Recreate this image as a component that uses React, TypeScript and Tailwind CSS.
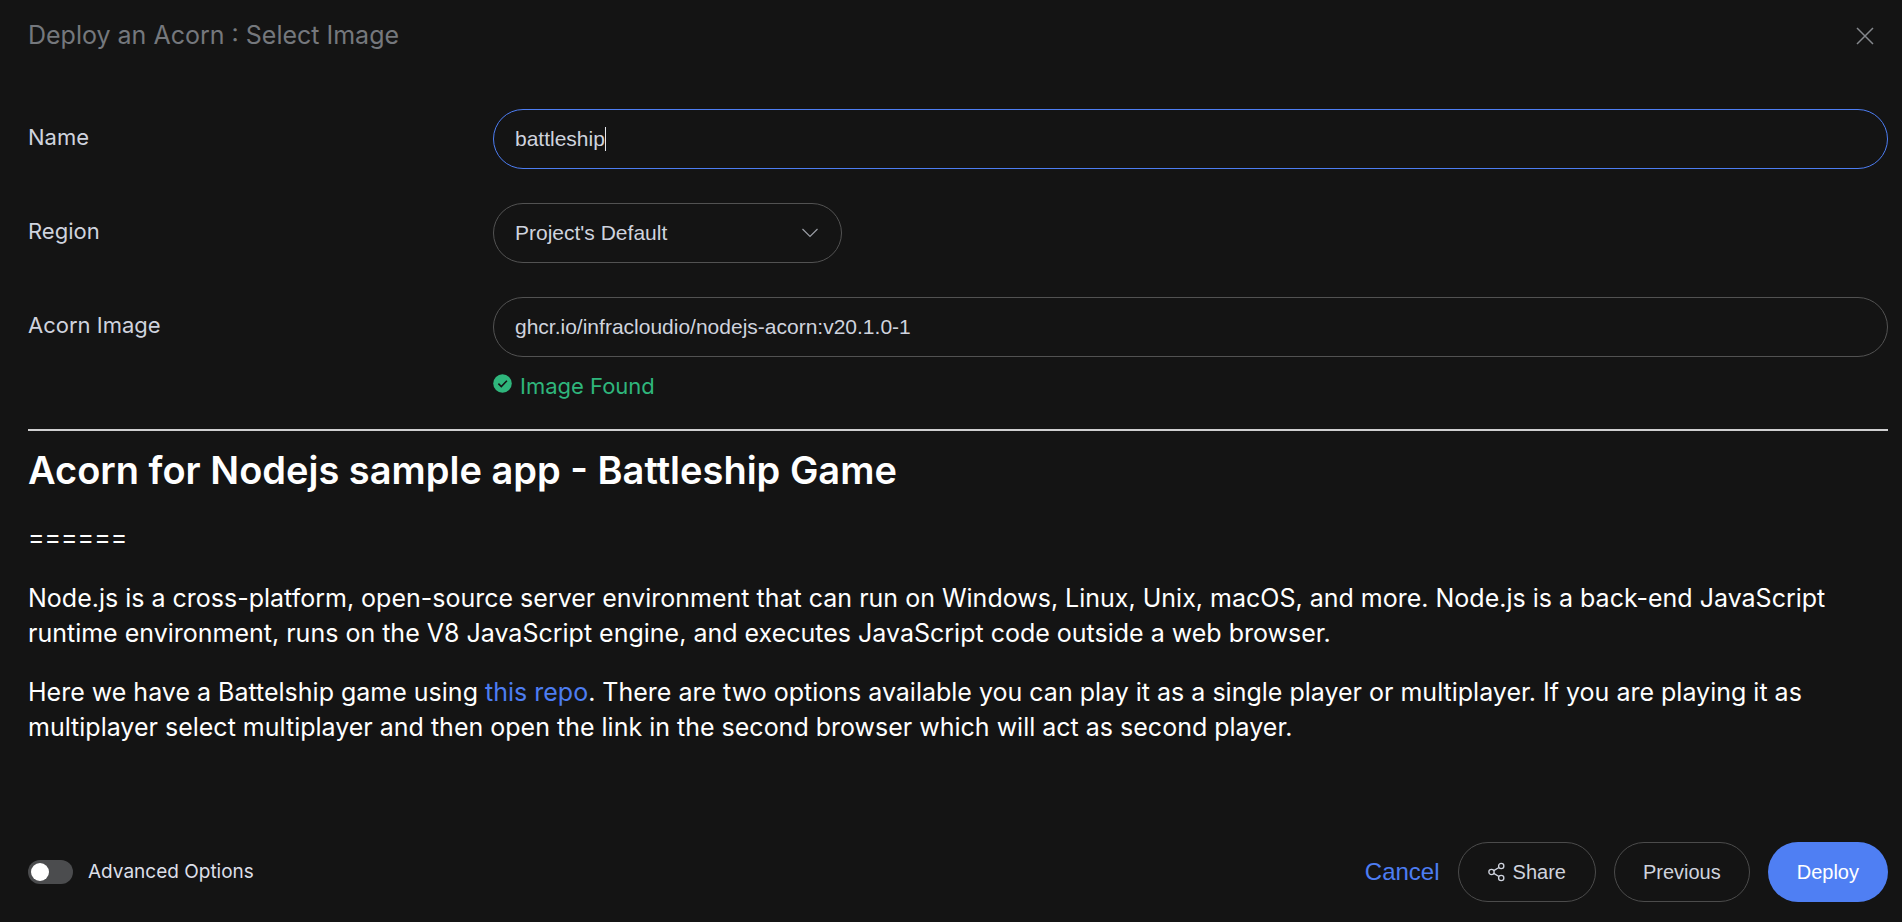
import { useState } from "react";

const sans = "font-['Liberation_Sans',Arial,sans-serif]";
const field =
  "h-[60px] rounded-full border bg-transparent px-[21px] font-['Liberation_Sans',Arial,sans-serif] text-[21px] text-[#cfd3de] outline-none";

function CloseIcon() {
  return (
    <svg width="18" height="18" viewBox="0 0 18 18" fill="none" stroke="currentColor" strokeWidth="1.5" aria-hidden="true">
      <path d="M1 1 17 17M17 1 1 17" />
    </svg>
  );
}

function ChevronIcon() {
  return (
    <svg className="pointer-events-none absolute top-1/2 right-6 -translate-y-1/2 text-[#9a9da5]" width="16" height="10" viewBox="0 0 16 10" fill="none" stroke="currentColor" strokeWidth="1.2" aria-hidden="true">
      <path d="M.5 1 8 8.5 15.500 1" />
    </svg>
  );
}

function CheckIcon() {
  return (
    <svg width="19" height="19" viewBox="0 0 19 19" aria-hidden="true">
      <circle cx="9.500" cy="9.500" r="9.300" fill="#2fb67c" />
      <path d="M5.400 9.600 8.300 12.500 13.900 6.700" fill="none" stroke="#141414" strokeWidth="1.600" />
    </svg>
  );
}

function ShareIcon() {
  return (
    <svg width="17" height="20" viewBox="0 0 18 20" fill="none" stroke="currentColor" strokeWidth="1.400" aria-hidden="true">
      <circle cx="3.700" cy="10" r="2.800" />
      <circle cx="14" cy="3.700" r="2.800" />
      <circle cx="14" cy="16.300" r="2.800" />
      <path d="M6.100 8.500 11.600 5.200M6.100 11.500 11.600 14.800" />
    </svg>
  );
}

export default function App() {
  const [name, setName] = useState("battleship");
  const [touched, setTouched] = useState(false);
  const [image, setImage] = useState("ghcr.io/infracloudio/nodejs-acorn:v20.1.0-1");

  return (
    <main className="flex min-h-screen flex-col bg-[#141414] pr-[14px] pl-7 font-[Inter,sans-serif] text-white">
      <header className="flex h-[71px] items-center justify-between pr-[14px]">
        <h1 className="text-[25px] text-[#75787d]">Deploy an Acorn : Select Image</h1>
        <button type="button" aria-label="Close" className="text-[#85888d]">
          <CloseIcon />
        </button>
      </header>

      <form id="deploy" className="grid grid-cols-[25%_1fr] gap-y-[34px] pt-[38px] text-[#cfd3de]" onSubmit={(e) => e.preventDefault()}>
        <label htmlFor="name" className="pt-3 text-[22px] leading-8">Name</label>
        <div className="relative">
          <input
            id="name"
            value={name}
            onFocus={() => setTouched(true)}
            onChange={(e) => setName(e.target.value)}
            className={`${field} w-full border-[#4d7df2]`}
          />
          {!touched && <span className="pointer-events-none absolute top-[18px] left-[112px] h-6 w-px bg-[#e4e6ec]" />}
        </div>

        <label htmlFor="region" className="pt-3 text-[22px] leading-8">Region</label>
        <div className="relative w-1/4">
          <select id="region" className={`${field} w-full appearance-none border-[#525252]`}>
            <option>Project's Default</option>
          </select>
          <ChevronIcon />
        </div>

        <label htmlFor="image" className="pt-3 text-[22px] leading-8">Acorn Image</label>
        <div>
          <input id="image" value={image} onChange={(e) => setImage(e.target.value)} className={`${field} w-full border-[#525252]`} />
          <p className="mt-[13px] flex gap-2 text-[22px] leading-8 text-[#2fb67c]">
            <span className="pt-1"><CheckIcon /></span>
            Image Found
          </p>
        </div>
      </form>

      <hr className="mt-[27px] border-t-2 border-[#cfcfd0]" />

      <article className="text-[25px] leading-[35px]">
        <h2 className="mt-[15px] text-[38px] leading-[48px] font-semibold">Acorn for Nodejs sample app - Battleship Game</h2>
        <p className="mt-[26px]">======</p>
        <p className="mt-[26px]">
          Node.js is a cross-platform, open-source server environment that can run on Windows, Linux, Unix, macOS, and more. Node.js is a back-end JavaScript runtime environment, runs on the V8 JavaScript engine, and executes JavaScript code outside a web browser.
        </p>
        <p className="mt-6">
          Here we have a Battelship game using <a href="#repo" className="text-[#4d7df2]">this repo</a>. There are two options available you can play it as a single player or multiplayer. If you are playing it as multiplayer select multiplayer and then open the link in the second browser which will act as second player.
        </p>
      </article>

      <footer className="mt-auto flex items-center justify-between pb-5">
        <label className="flex items-center gap-[15px] text-[19px] text-[#dcdfe8]">
          <input type="checkbox" role="switch" className="h-6 w-[45px] appearance-none rounded-full bg-[#4b4c4e] p-[3px] before:block before:size-[18px] before:rounded-full before:bg-white checked:bg-[#4d7df2] checked:before:ml-auto" />
          Advanced Options
        </label>
        <div className={`${sans} flex items-center gap-[18px] text-xl text-[#cfd3de]`}>
          <button type="button" className="text-2xl text-[#4d7df2]">Cancel</button>
          <button type="button" className="flex h-[60px] items-center gap-2 rounded-full border border-[#4b4b4b] px-[29px]">
            <ShareIcon />
            Share
          </button>
          <button type="button" className="h-[60px] rounded-full border border-[#4b4b4b] px-7">Previous</button>
          <button type="submit" form="deploy" className="h-[60px] rounded-full bg-[#4f7ff3] px-[29px] text-white">Deploy</button>
        </div>
      </footer>
    </main>
  );
}
